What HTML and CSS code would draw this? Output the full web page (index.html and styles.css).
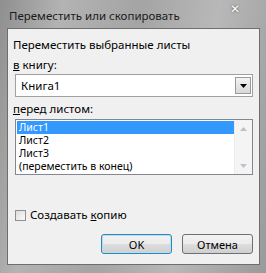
FILE: index.html
```html
<!DOCTYPE html>
<html lang="ru">
<head>
    <meta charset="UTF-8">
    <title>Переместить или скопировать</title>
    <link rel="stylesheet" href="styles.css">
</head>
<body>
    <div class="window">
        <div class="titlebar">
            <span class="title">Переместить или скопировать</span>
            <span class="close">&#10005;</span>
        </div>
        <div class="client">
            <p class="caption">Переместить выбранные листы</p>
            <p class="label"><u>в</u> книгу:</p>
            <div class="combo">
                <span class="combo-text">Книга1</span>
                <span class="combo-btn"><svg width="7" height="4" viewBox="0 0 7 4"><path d="M0 0h7L3.5 4z" fill="#000"/></svg></span>
            </div>
            <p class="label label-list"><u>п</u>еред листом:</p>
            <div class="listbox">
                <ul class="items">
                    <li class="selected">Лист1</li>
                    <li>Лист2</li>
                    <li>Лист3</li>
                    <li>(переместить в конец)</li>
                </ul>
                <div class="scrollbar">
                    <svg width="7" height="4" viewBox="0 0 7 4"><path d="M0 4h7L3.5 0z" fill="#c0c0c0"/></svg>
                    <svg width="7" height="4" viewBox="0 0 7 4"><path d="M0 0h7L3.5 4z" fill="#c0c0c0"/></svg>
                </div>
            </div>
            <label class="check">
                <span class="box"></span>
                <span>Создавать <u>к</u>опию</span>
            </label>
            <div class="buttons">
                <button class="btn default">OK</button>
                <button class="btn">Отмена</button>
            </div>
        </div>
    </div>
</body>
</html>
```

FILE: styles.css
```css
body {
    margin: 0;
    font-family: "Noto Sans", "DejaVu Sans", sans-serif;
    font-size: 11.5px;
    color: #000;
}
.window {
    width: 266px;
    height: 273px;
    box-sizing: border-box;
    padding: 0 6px 8px 7px;
    background: linear-gradient(100deg, #8f8f8f 0%, #b3b3b3 20%, #a4a4a4 45%, #b8b8b8 70%, #9a9a9a 100%);
    display: flex;
    flex-direction: column;
}
.titlebar {
    height: 28px;
    display: flex;
    align-items: center;
    justify-content: space-between;
    padding: 0 0 0 2px;
}
.title {
    font-size: 11.5px;
    color: #1a1a1a;
    margin-top: 2px;
}
.close {
    color: #fff;
    font-size: 12px;
    font-weight: bold;
    margin: -12px 20px 0 0;
    text-shadow: 0 0 2px #444;
}
.client {
    flex: 1;
    background: #f0f0f0;
    border: 1px solid #6e6e6e;
    padding: 0 6px 0 5px;
    display: flex;
    flex-direction: column;
}
.caption {
    margin: 9px 0 0;
    line-height: 14px;
}
.label {
    margin: 6px 0 0;
    line-height: 14px;
}
.label-list {
    margin-top: 5px;
}
.label u {
    text-decoration-thickness: 1px;
}
.combo {
    margin: 2px 0 0 2px;
    height: 23px;
    box-sizing: border-box;
    border: 1px solid #a0a0a0;
    background: #fff;
    display: flex;
    align-items: center;
    justify-content: space-between;
    padding: 0 1px 0 5px;
}
.combo-btn {
    width: 16px;
    height: 17px;
    box-sizing: border-box;
    border: 1px solid #9a9a9a;
    background: linear-gradient(#f4f4f4, #d8d8d8);
    display: flex;
    align-items: center;
    justify-content: center;
}
.listbox {
    margin: 3px 0 0 2px;
    height: 56px;
    box-sizing: border-box;
    border: 1px solid #828790;
    background: #fff;
    display: flex;
}
.items {
    list-style: none;
    margin: 0;
    padding: 1px 0 0 1px;
    flex: 1;
    font-size: 10.5px;
}
.items li {
    line-height: 13px;
    height: 13px;
    padding-left: 2px;
}
.items .selected {
    background: #3399ff;
    color: #fff;
}
.scrollbar {
    width: 17px;
    background: #f4f4f4;
    border-left: 1px solid #ececec;
    display: flex;
    flex-direction: column;
    justify-content: space-between;
    align-items: center;
    padding: 7px 0 6px;
}
.check {
    margin: 33px 0 0 2px;
    display: flex;
    align-items: center;
    gap: 4px;
    line-height: 14px;
}
.box {
    width: 11px;
    height: 11px;
    box-sizing: border-box;
    border: 1px solid #8f8f8f;
    background: linear-gradient(135deg, #dcdcdc, #fafafa);
}
.buttons {
    margin-top: 12px;
    display: flex;
    justify-content: flex-end;
    gap: 10px;
}
.btn {
    font-family: inherit;
    font-size: 11px;
    width: 71px;
    height: 20px;
    padding: 0;
    border: 1px solid #707070;
    border-radius: 3px;
    background: linear-gradient(#f2f2f2 0%, #ebebeb 50%, #dddddd 51%, #cfcfcf 100%);
    color: #000;
}
.btn.default {
    border-color: #3c7fb1;
    box-shadow: inset 0 0 0 1px #a8e4f6;
}
```
